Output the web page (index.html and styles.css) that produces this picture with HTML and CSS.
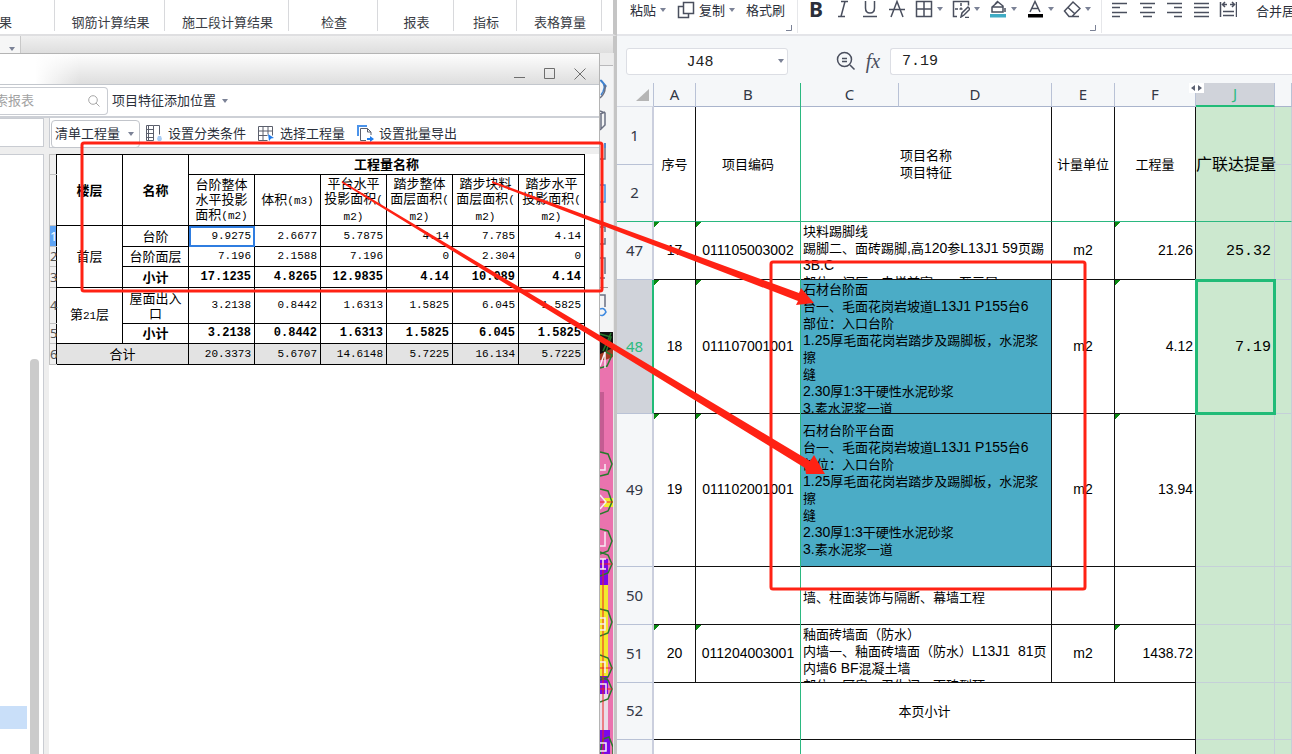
FILE: index.html
```html
<!DOCTYPE html>
<html lang="zh-CN">
<head>
<meta charset="utf-8">
<title>工程量对照</title>
<link rel="stylesheet" href="styles.css">
</head>
<body>
<svg width="0" height="0" class="defs" aria-hidden="true">
  <symbol id="caret" viewBox="0 0 6 4"><path d="M0 0h6L3 4z"/></symbol>
</svg>
<main class="desktop">
  <section class="modeler">
    <nav class="tabs">
      <button class="tab tab-edge">结果</button>
      <button class="tab tab-l">钢筋计算结果</button>
      <button class="tab tab-xl">施工段计算结果</button>
      <button class="tab tab-m">检查</button>
      <button class="tab tab-s">报表</button>
      <button class="tab tab-xs">指标</button>
      <button class="tab tab-m2">表格算量</button>
    </nav>
    <div class="under-tabs"><button class="stub" aria-label="展开"><svg class="caret"><use href="#caret"/></svg></button></div>
    <div class="work">
      <section class="dialog">
        <header class="titlebar">
          <button aria-label="最小化"><svg width="12" height="12"><path d="M0 9.500h11"/></svg></button>
          <button aria-label="最大化"><svg width="12" height="12"><path d="M.5 .5h10v10H.5z"/></svg></button>
          <button aria-label="关闭"><svg width="12" height="12"><path d="M.5 .5l11 11M11.500 .5l-11 11"/></svg></button>
        </header>
        <div class="searchbar">
          <div class="search">
            <input type="text" placeholder="索报表" aria-label="搜索报表">
            <svg width="12" height="12"><circle cx="5" cy="5" r="4.300"/><path d="M8 8l3.500 3.500"/></svg>
          </div>
          <button class="drop">项目特征添加位置 <svg class="caret"><use href="#caret"/></svg></button>
        </div>
        <div class="dialog-body">
          <aside class="tree">
            <div class="tree-head"></div>
            <div class="tree-list"><div class="tree-item"></div><div class="thumb"></div></div>
          </aside>
          <div class="report">
            <div class="report-tools">
              <div class="picker">
                <select aria-label="工程量类型"><option>清单工程量</option></select>
                <svg class="caret"><use href="#caret"/></svg>
              </div>
              <button class="tool"><svg width="17" height="17"><path d="M.5 .5h7v15h-7zM.5 4.500h7M.5 8.500h7M.5 12.500h7M7.500 .5h6v9M2.500 .5v15" class="ln"/><path d="M11 14l1-3h3l1 3-1 2h-3z" class="soft"/></svg>设置分类条件</button>
              <button class="tool"><svg width="17" height="17"><path d="M.5 1.500h14v9M.5 1.500v14h9M.5 6h14M.5 10.500h9M5 1.500v14M10 1.500v8" class="ln"/><path d="M10 9l6 4-3 .5-2 2.500z" class="blue"/></svg>选择工程量</button>
              <button class="tool"><svg width="17" height="17"><path d="M1 11V1h9" class="bl"/><path d="M9 15.500H3.500v-12h7l3.500 3.500v3M10.500 3.500V7H14" class="ln"/><path d="M10 11v2h3v-2l4 3-4 3v-2h-3z" class="blue"/></svg>设置批量导出</button>
            </div>
            <div class="report-sheet">
              <table class="qty">
                <colgroup><col class="q-idx"><col class="q-floor"><col class="q-cell"><col class="q-cell"><col class="q-cell"><col class="q-cell"><col class="q-cell"><col class="q-cell"><col class="q-cell"></colgroup>
                <thead>
                  <tr class="h20"><th class="idx"></th><th rowspan="2">楼层</th><th rowspan="2">名称</th><th colspan="6">工程量名称</th></tr>
                  <tr class="h51"><th class="idx"></th><td>台阶整体<br>水平投影<br>面积<i>(m2)</i></td><td>体积<i>(m3)</i></td><td>平台水平<br>投影面积<i>(<br>m2)</i></td><td>踏步整体<br>面层面积<i>(<br>m2)</i></td><td>踏步块料<br>面层面积<i>(<br>m2)</i></td><td>踏步水平<br>投影面积<i>(<br>m2)</i></td></tr>
                </thead>
                <tbody>
                  <tr class="h21"><th class="idx on">1</th><td rowspan="3">首层</td><td>台阶</td><td class="v sel">9.9275</td><td class="v">2.6677</td><td class="v">5.7875</td><td class="v">4.14</td><td class="v">7.785</td><td class="v">4.14</td></tr>
                  <tr class="h20"><th class="idx">2</th><td>台阶面层</td><td class="v">7.196</td><td class="v">2.1588</td><td class="v">7.196</td><td class="v">0</td><td class="v">2.304</td><td class="v">0</td></tr>
                  <tr class="h21 sum"><th class="idx">3</th><td>小计</td><td class="v">17.1235</td><td class="v">4.8265</td><td class="v">12.9835</td><td class="v">4.14</td><td class="v">10.089</td><td class="v">4.14</td></tr>
                  <tr class="h36"><th class="idx">4</th><td rowspan="2">第<i>21</i>层</td><td>屋面出入<br>口</td><td class="v">3.2138</td><td class="v">0.8442</td><td class="v">1.6313</td><td class="v">1.5825</td><td class="v">6.045</td><td class="v">1.5825</td></tr>
                  <tr class="h20 sum"><th class="idx">5</th><td>小计</td><td class="v">3.2138</td><td class="v">0.8442</td><td class="v">1.6313</td><td class="v">1.5825</td><td class="v">6.045</td><td class="v">1.5825</td></tr>
                  <tr class="h21 total"><th class="idx">6</th><td colspan="2">合计</td><td class="v">20.3373</td><td class="v">5.6707</td><td class="v">14.6148</td><td class="v">5.7225</td><td class="v">16.134</td><td class="v">5.7225</td></tr>
                </tbody>
              </table>
            </div>
          </div>
        </div>
      </section>
      <div class="side">
        <svg class="side-art" width="17" height="701" viewBox="600 53 17 701">
          <path d="M600 66h13v266h-13z" fill="#f3f4f5"/>
          <path d="M600 65.500h13" stroke="#b9b9bb"/>
          <g fill="none" stroke-width="1.500">
            <path d="M600 80q8 6 1 15M601 80l5 6-3 5" stroke="#3f82cf"/>
            <path d="M600 98q6-5 5-13M600 111l5 2v12l-5 5M600 114l5-2M601 114v15M600 159h5v-16M600 244h5v-6M605 232v-5h-5M600 278h5M605 274v-16h-5M600 295h5v12" stroke="#6b7082"/>
            <path d="M600 185h5v17h-5M605 143v5M600 309q4-2 6 3-3 5-6 3" stroke="#3f8ae0"/>
            <path d="M600 287.500h8" stroke="#999" stroke-width="1"/>
          </g>
          <path d="M600 332h13v422h-13z" fill="#ea73ae"/>
          <path d="M600 332h13v28h-13z" fill="#111"/>
          <path d="M600 354l13-6v12h-13z" fill="#a43a22"/>
          <path d="M600 362l13-5v40h-13z" fill="#ea73ae"/>
          <path d="M600 392h4v60h-4z" fill="#c45c92"/>
          <path d="M604 498h9v9h-9zM600 585h8v72h-8zM600 657h8v19h-8z" fill="#f1ea2d"/>
          <path d="M600 559h8v26h-8zM600 676h8v18h-8zM600 730h10v24h-10z" fill="#7b08e8"/>
          <path d="M600 694h8v36h-8z" fill="#eadde8"/>
          <g fill="none" stroke="#277b2c" stroke-width="1.500">
            <path d="M600 334l11 3-5 15 6 3-5 11-7 2M611 333l-8 18M600 452l8 2 4 10-4 10-8 2M600 489l8 2 4 11-4 9-8 3M600 529l8 2 4 10-4 10-8 3M600 552l8 3 4 9-4 9-8 3M600 609l8 2 4 11-4 11-8 3M600 655l8 3 4 10-4 9-8 3M600 677l8 3 4 9-4 10-8 3M600 754l3-15 6-2 4 10v7"/>
          </g>
          <path d="M603 560v194M600 502h13M600 564h12M600 668h12M600 689h12" stroke="#ef2020" fill="none"/>
          <path d="M600 366l5-14v16M600 470h5v-6M600 495l6 7-6 7M600 546h5v-14M600 559h6M600 569h6M603 559v10M600 618h5v12h-5M605 624h-5M600 662h5v11M600 684h6v10M600 743h6v8h-6" stroke="#f7eef5" stroke-width="1.500" fill="none"/>
          <path d="M613 53h4v701h-4z" fill="#c5c5c5"/><path d="M613 53h1v701h-1z" fill="#e8e8e8"/>
        </svg>
      </div>
    </div>
  </section>

  <section class="sheet-app">
    <div class="ribbon">
      <div class="group clip-group">
        <div class="row">
          <button>粘贴<svg class="caret"><use href="#caret"/></svg></button>
          <button><svg width="18" height="18" class="ic"><path d="M6.500 1.500h10v11h-10zM6.500 5.500h-5v11h10v-4"/></svg>复制<svg class="caret"><use href="#caret"/></svg></button>
          <button>格式刷</button>
        </div>
        <svg class="corner" width="6" height="6"><path d="M5.500 0v5.500H0"/></svg>
      </div>
      <div class="group font-group">
        <div class="row">
          <button class="bold" aria-label="加粗">B</button>
          <button aria-label="倾斜"><svg width="18" height="18" class="ic"><path d="M7 1.500h7M4 16.500h7M11 1.500l-4 15"/></svg></button>
          <button aria-label="下划线"><svg width="18" height="18" class="ic"><path d="M4.500 1v7q0 5 4.500 5t4.500-5V1M2 16.500h14"/></svg></button>
          <button aria-label="删除线"><svg width="18" height="18" class="ic"><path d="M3 17L9 1.500 15 17M1 9.500h16"/></svg></button>
          <button aria-label="边框"><svg width="18" height="18" class="ic"><path d="M1.500 1.500h15v15h-15zM9 1.500v15M1.500 9h15"/></svg><svg class="caret"><use href="#caret"/></svg></button>
          <button aria-label="绘制边框"><svg width="18" height="18" class="ic"><path d="M5 16.500H1.500v-15h15v4M9 3v3M9 7.500v2M3 9h3M7.500 9h3M9 17l1-4 6-6 2 2-6 6zM13 17.500h4"/></svg><svg class="caret"><use href="#caret"/></svg></button>
          <button aria-label="填充颜色"><svg width="18" height="18" class="ic"><path d="M3 12h11V6L9 2 3 7zM3 7h11M16 8v4M6 4l3-3"/><path d="M1 14h16v3.500H1z" class="teal"/></svg><svg class="caret"><use href="#caret"/></svg></button>
          <button aria-label="字体颜色"><svg width="18" height="18" class="ic"><path d="M4 12L9 1.500 14 12M5.500 8.500h7"/><path d="M2 14h15v3.500H2z" class="black"/></svg><svg class="caret"><use href="#caret"/></svg></button>
          <button aria-label="清除"><svg width="18" height="18" class="ic"><path d="M1.500 11L10 2l7 6.500-8 8H6zM5 7.500l7 6.500M9 16.500h7"/></svg><svg class="caret"><use href="#caret"/></svg></button>
        </div>
        <svg class="corner" width="6" height="6"><path d="M5.500 0v5.500H0"/></svg>
      </div>
      <div class="group align-group">
        <div class="row">
          <button aria-label="左对齐"><svg width="18" height="18" class="ic"><path d="M1 3.500h15M1 7.500h8M1 12.500h15M1 16.500h8"/></svg></button>
          <button aria-label="居中"><svg width="18" height="18" class="ic"><path d="M2 3.500h15M5 7.500h9M2 12.500h15M5 16.500h9"/></svg></button>
          <button aria-label="右对齐"><svg width="18" height="18" class="ic"><path d="M2 3.500h15M9 7.500h8M2 12.500h15M9 16.500h8"/></svg></button>
          <button aria-label="两端对齐"><svg width="18" height="18" class="ic"><path d="M2 3.500h15M2 7.500h15M2 12.500h15M2 16.500h15"/></svg></button>
          <button aria-label="分散对齐"><svg width="18" height="18" class="ic"><path d="M1.500 2v15M17.500 2v15M4 4.500h4M11 4.500h4M6 2L3.500 4.500 6 7M13 2l2.500 2.500L13 7M4 11.500h11M4 15.500h11"/></svg></button>
          <button class="merge">合并居中</button>
        </div>
      </div>
    </div>
    <div class="formula">
      <div class="namebox"><input type="text" value="J48" aria-label="名称框"><svg class="caret"><use href="#caret"/></svg></div>
      <button class="mag" aria-label="查找"><svg width="20" height="20" class="ic"><circle cx="8.500" cy="8.500" r="7"/><path d="M14 14l4.500 4.500M6 7.500h5M6 10.500h5"/></svg></button>
      <button class="fx">fx</button>
      <input class="fbox" type="text" value="7.19" aria-label="编辑栏">
    </div>
    <div class="grid">
      <table class="cells">
        <colgroup><col class="c-h"><col class="c-a"><col class="c-b"><col class="c-c"><col class="c-d"><col class="c-e"><col class="c-f"><col class="c-j"><col></colgroup>
        <thead>
          <tr class="r-head"><th class="all"><svg width="13" height="12"><path d="M13 0v12H0z"/></svg></th><th>A</th><th>B</th><th>C</th><th>D</th><th>E</th><th>F</th><th class="act">J</th><th></th></tr>
        </thead>
        <tbody>
          <tr class="r58"><th>1</th><td rowspan="2" class="frz">序号</td><td rowspan="2" class="frz">项目编码</td><td rowspan="2" colspan="2" class="frz">项目名称<br>项目特征</td><td rowspan="2" class="frz">计量单位</td><td rowspan="2" class="frz">工程量</td><td rowspan="2" class="frz g big">广联达提量</td><td class="g"></td></tr>
          <tr class="r57"><th class="frz">2</th><td class="g frz"></td></tr>
          <tr class="r58"><th>47</th><td class="n m">17</td><td class="n m">011105003002</td><td colspan="2" class="t"><div class="clip58">块料踢脚线<br>踢脚二、面砖踢脚<b>,</b>高<b>120</b>参<b>L13J1 59</b>页踢<br><b>3B.C</b><br>部位：门厅、电梯前室、一至三层</div></td><td class="n">m2</td><td class="n m rt">21.26</td><td class="g mono">25.32</td><td class="g"></td></tr>
          <tr class="r134"><th class="act">48</th><td class="n m">18</td><td class="n m">011107001001</td><td colspan="2" class="t fill"><div class="clip134">石材台阶面<br>台一、毛面花岗岩坡道<b>L13J1 P155</b>台<b>6</b><br>部位：入口台阶<br><b>1.25</b>厚毛面花岗岩踏步及踢脚板，水泥浆<br>擦<br>缝<br><b>2.30</b>厚<b>1:3</b>干硬性水泥砂浆<br><b>3.</b>素水泥浆一道</div></td><td class="n">m2</td><td class="n m rt">4.12</td><td class="g mono picked">7.19</td><td class="g"></td></tr>
          <tr class="r153"><th>49</th><td class="n m">19</td><td class="n m">011102001001</td><td colspan="2" class="t fill">石材台阶平台面<br>台一、毛面花岗岩坡道<b>L13J1 P155</b>台<b>6</b><br>部位：入口台阶<br><b>1.25</b>厚毛面花岗岩踏步及踢脚板，水泥浆<br>擦<br>缝<br><b>2.30</b>厚<b>1:3</b>干硬性水泥砂浆<br><b>3.</b>素水泥浆一道</td><td class="n">m2</td><td class="n m rt">13.94</td><td class="g"></td><td class="g"></td></tr>
          <tr class="r58"><th>50</th><td></td><td></td><td colspan="2" class="t low">墙、柱面装饰与隔断、幕墙工程</td><td></td><td></td><td class="g"></td><td class="g"></td></tr>
          <tr class="r58"><th>51</th><td class="n m">20</td><td class="n m">011204003001</td><td colspan="2" class="t"><div class="clip58">釉面砖墙面（防水）<br>内墙一、釉面砖墙面（防水）<b>L13J1&nbsp; 81</b>页<br>内墙<b>6 BF</b>混凝土墙<br>部位：厨房、卫生间、面砖到顶</div></td><td class="n">m2</td><td class="n m rt">1438.72</td><td class="g"></td><td class="g"></td></tr>
          <tr class="r57"><th>52</th><td colspan="6">本页小计</td><td class="g"></td><td class="g"></td></tr>
          <tr class="r57"><th></th><td colspan="6"></td><td class="g"></td><td class="g"></td></tr>
        </tbody>
      </table>
      <div class="freeze-v"></div>
      <svg class="hidden-cols" width="15" height="10"><path d="M0 0h15v10H0z" fill="#fff"/><path d="M6 2v6L2 5zM9 2v6l4-3z" fill="#5c6273"/></svg>
    </div>
  </section>
</main>
<svg class="marks" width="1292" height="754" aria-hidden="true">
  <rect x="82" y="143" width="520" height="148" rx="2"/>
  <rect x="771" y="262" width="314" height="327" rx="2"/>
  <path d="M492 181L799 293L801 288L814 303L796 305L798 301L492 183z"/>
  <path d="M342 181L810 461L814 455L825 474L806 474L805 468L342 183z"/>
</svg>
</body>
</html>
```

FILE: styles.css
```css
* { box-sizing: border-box; }
body {
  margin: 0;
  height: 100vh;
  overflow: hidden;
  position: relative;
  font: 13px/17px "Liberation Sans", "Noto Sans CJK SC", sans-serif;
  color: #2b2f3a;
  background: #fff;
}
button, input, select { font: inherit; color: inherit; border: 0; background: none; padding: 0; margin: 0; }
svg { display: block; flex: none; }
.defs { position: absolute; }
.caret { width: 6px; height: 4px; fill: #7b8296; }
.desktop { display: flex; height: 100vh; }

/* modelling application */
.modeler { flex: 0 0 617px; display: flex; flex-direction: column; background: #ececec; }
.tabs { display: flex; height: 36px; background: #fff; border-bottom: 2px solid #dfdfe1; border-right: 4px solid #c5c5c5; }
.tab { height: 31px; padding: 14px 0 0 2px; border-right: 1px solid #d8d9dc; white-space: nowrap; color: #3a3d45; }
.tab-edge { width: 55px; display: flex; justify-content: flex-start; direction: rtl; padding-right: 42px; }
.tab-l { width: 110px; }
.tab-xl { width: 124px; }
.tab-m { width: 89px; }
.tab-s { width: 76px; }
.tab-xs { width: 63px; }
.tab-m2 { width: 85px; }
.under-tabs { height: 17px; background: linear-gradient(#f0f0f0, #dedede); border-right: 4px solid #c5c5c5; }
.stub { display: flex; width: 21px; height: 17px; padding: 11px 0 0 9px; background: #f6f6f6; border-right: 1px solid #c9c9c9; }
.work { display: flex; flex: 1; min-height: 0; }
.dialog { flex: 1; display: flex; flex-direction: column; background: #eee; border-top: 1px solid #b4b4b4; border-right: 1px solid #b4b4b4; }
.titlebar {
  display: flex; justify-content: flex-end; align-items: center; gap: 18px;
  height: 31px; padding: 9px 13px 0 0;
  background: linear-gradient(90deg, #fff 35px, transparent 80px), linear-gradient(#fdfdfd, #dedede);
  border-bottom: 1px solid #c3c7cd;
}
.titlebar svg { fill: none; stroke: #6e6e6e; }
.searchbar { display: flex; align-items: center; height: 33px; gap: 4px; background: #fff; border-bottom: 2px solid #cdd0d6; }
.search { display: flex; align-items: center; width: 108px; height: 28px; padding-right: 7px; border: 1px solid #c9ccd2; border-left: 0; border-radius: 0 4px 4px 0; }
.search input { flex: 1; min-width: 0; text-indent: -5px; outline: 0; }
.search input::placeholder { color: #a2a2a2; opacity: 1; }
.search svg { fill: none; stroke: #a8a8a8; }
.drop { display: flex; align-items: center; gap: 6px; }
.dialog-body { display: flex; flex: 1; min-height: 0; gap: 5px; }
.tree { flex: 0 0 44px; display: flex; flex-direction: column; gap: 7px; }
.tree-head { height: 29px; background: #fff; border: 1px solid #c9ccd2; border-left: 0; }
.tree-list { flex: 1; display: flex; justify-content: space-between; padding-right: 4px; background: #fff; border: 1px solid #c9ccd2; border-width: 1px 1px 0 0; }
.tree-item { width: 27px; height: 23px; margin-top: 551px; background: #c9dff9; }
.thumb { width: 9px; margin-top: 204px; background: #cbcbcb; border-radius: 4px 4px 0 0; }
.report { flex: 1; display: flex; flex-direction: column; gap: 6px; }
.report-tools { display: flex; align-items: center; gap: 12px; height: 30px; padding: 2px 0 0 1px; background: #fff; border: 1px solid #c9ccd2; border-width: 0 0 1px 1px; }
.picker { display: grid; align-items: center; width: 89px; height: 28px; margin-right: -6px; border: 1px solid #c2c5cb; border-radius: 4px; }
.picker > * { grid-area: 1 / 1; }
.picker select { appearance: none; padding-left: 3px; outline: 0; }
.picker .caret { justify-self: end; margin-right: 5px; }
.tool { display: flex; align-items: center; gap: 5px; white-space: nowrap; }
.ln { fill: none; stroke: #5b5f6c; }
.bl { fill: none; stroke: #4b93ea; stroke-width: 2; }
.blue { fill: #1f7bea; }
.soft { fill: #a9cdf5; }
.report-sheet { flex: 1; background: #fff; }

.qty { table-layout: fixed; width: 536px; border-collapse: collapse; color: #000; font-size: 13px; line-height: 15px; text-align: center; }
.q-idx { width: 7px; }
.q-floor { width: 66px; }
.q-cell { width: 66px; }
.qty td, .qty th { padding: 0; border: 1px solid #000; white-space: nowrap; }
.qty i { font: 11px/15px "Liberation Mono", monospace; }
.qty .idx { font: 13px/15px "Noto Sans", sans-serif; color: #555; background: #f0f0f0; border-color: #c2c2c2 #000 #c2c2c2 #c2c2c2; }
.qty .on { background: #5ea4f5; color: #fff; }
.qty .v { text-align: right; padding: 0 3px 1px 0; font: 11px/14px "Liberation Mono", monospace; }
.qty .sum td { font-weight: bold; }
.qty .sum .v { font-size: 12px; }
.qty .total td { background: #e3e3e3; }
.qty .sel { outline: 2px solid #2f7de0; outline-offset: -2px; }
.h20 { height: 20px; }
.h21 { height: 21px; }
.h36 { height: 36px; }
.h51 { height: 51px; }
.side { flex: 0 0 17px; background: #ececec; overflow: hidden; }

/* spreadsheet application */
.sheet-app { flex: 1; min-width: 0; display: flex; flex-direction: column; background: #f5f7f9; overflow: hidden; }
.ribbon { display: flex; height: 36px; background: #fff; border-bottom: 2px solid #e4e5e9; }
.group { display: flex; flex-direction: column; height: 33px; border-right: 1px solid #e6e7ea; }
.row { display: flex; align-items: center; height: 20px; gap: 9px; }
.row button { display: flex; align-items: center; gap: 4px; white-space: nowrap; }
.clip-group { width: 181px; padding-left: 13px; }
.clip-group .row { gap: 11px; }
.font-group { width: 304px; padding-left: 9px; }
.font-group .row, .align-group .row { height: 18px; }
.align-group { flex: 1; min-width: 0; padding-left: 9px; border: 0; }
.row .bold { justify-content: center; width: 18px; font: bold 21px/18px "Noto Sans", sans-serif; }
.row .merge { margin: 4px 0 0 10px; }
.ic { fill: none; stroke: #4a4f5e; stroke-width: 1.5; }
.teal { fill: #3fabc4; stroke: none; }
.black { fill: #000; stroke: none; }
.corner { align-self: flex-end; margin: auto 5px 2px 0; fill: none; stroke: #7b8296; }
.formula { display: flex; align-items: center; height: 47px; padding: 3px 0 0 9px; color: #222; font: 15px/20px "Liberation Mono", monospace; }
.namebox { display: flex; align-items: center; width: 162px; height: 27px; padding-right: 3px; background: #fff; border: 1px solid #dcdee4; border-radius: 3px; }
.namebox input { flex: 1; min-width: 0; padding: 4px 5px 0 0; text-align: center; outline: 0; }
.mag { margin-left: 48px; }
.fx { width: 34px; color: #4a4f5e; font: italic 20px/24px "Liberation Serif", serif; }
.fbox { flex: 1; min-width: 0; height: 27px; padding-left: 11px; background: #fff; border: 1px solid #dcdee4; border-right: 0; border-radius: 3px 0 0 3px; }
.grid { position: relative; flex: 1; min-height: 0; overflow: hidden; }

.cells { table-layout: fixed; width: 100%; border-collapse: separate; border-spacing: 0; color: #000; text-align: center; }
.c-h { width: 37px; }
.c-a { width: 42px; }
.c-b { width: 105px; }
.c-c { width: 98px; }
.c-d { width: 153px; }
.c-e { width: 63px; }
.c-f { width: 81px; }
.c-j { width: 79px; }
.cells td, .cells th { padding: 0; border: solid #111; border-width: 0 1px 1px 0; }
.cells td { background-color: #fff; }
.cells th { padding-bottom: 2px; font: 15px/20px "Noto Sans", sans-serif; color: #333846; background: #f5f7f9; border-color: #b9c2d6; }
.cells tbody th { border-right: 2px solid #cbcfde; }
.cells thead th { border-bottom-color: #a9b4cc; }
.cells .all { border-bottom-color: #d5d9e3; }
.all svg { margin: 2px 0 0 19px; fill: #b5b5b5; }
.cells .act { background: #d0d3da; color: #2dbb80; }
.cells thead .act { border-bottom: 2px solid #21bb78; }
.cells tbody .act { border-right-color: #21bb78; }
.r-head { height: 24px; }
.r57 { height: 57px; }
.r58 { height: 58px; }
.r134 { height: 134px; }
.r153 { height: 153px; }
.cells tbody .frz { border-bottom-color: #2bb880; }
.cells .g { background: #cce8cf; border-color: #c5d0d8; }
.cells .big { font-size: 16px; white-space: nowrap; }
.n, .cells b { font-size: 14px; font-weight: normal; line-height: 16px; }
.cells .n { padding-bottom: 2px; }
.cells .rt { text-align: right; padding-right: 2px; }
.m { background-image: linear-gradient(135deg, #0b8a12 4px, transparent 4px); }
.cells .mono { font: 15px/20px "Liberation Mono", monospace; text-align: right; padding: 3px 3px 0 0; }
.cells .t { text-align: left; padding-left: 2px; white-space: nowrap; }
.cells .low { padding-top: 3px; }
.cells .fill { background: #4bacc6; }
.clip58 { height: 57px; padding-top: 1px; overflow: hidden; }
.clip134 { height: 133px; padding-top: 1px; overflow: hidden; }
.cells .picked { outline: 3px solid #21bb78; outline-offset: -2px; }
.freeze-v { position: absolute; left: 183px; top: 0; bottom: 0; width: 1px; background: #2bb880; }
.hidden-cols { position: absolute; left: 572px; top: 0; }

/* annotation layer */
.marks { position: absolute; left: 0; top: 0; pointer-events: none; }
.marks rect { fill: none; stroke: #ff2214; stroke-width: 3; }
.marks path { fill: #ff2214; }
```
